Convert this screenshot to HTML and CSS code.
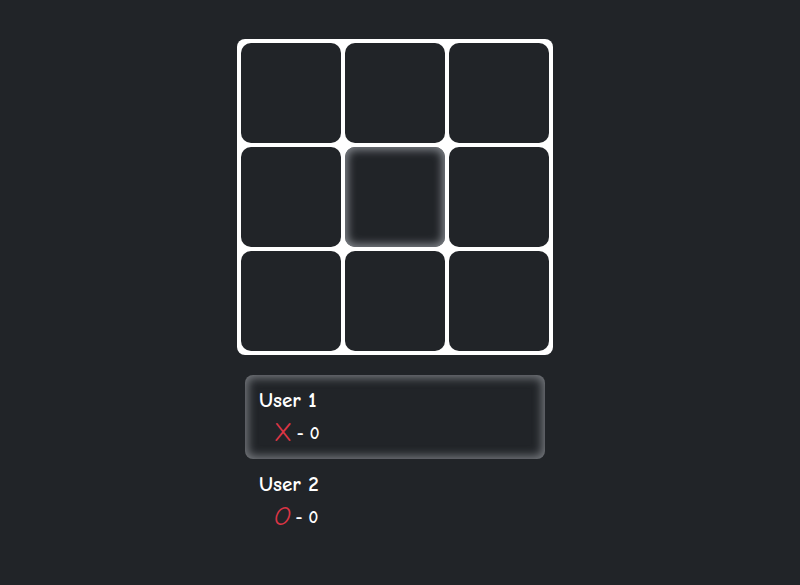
FILE: index.html
```html
<!DOCTYPE html>
<html lang="en">
<head>
<meta charset="utf-8">
<title>Tic Tac Toe</title>
<link rel="stylesheet" href="styles.css">
</head>
<body>
<main class="game">
  <div class="board">
    <div class="cell"></div>
    <div class="cell"></div>
    <div class="cell"></div>
    <div class="cell"></div>
    <div class="cell cell-focus"></div>
    <div class="cell"></div>
    <div class="cell"></div>
    <div class="cell"></div>
    <div class="cell"></div>
  </div>
  <div class="players">
    <div class="player player-active">
      <div class="player-name">User 1</div>
      <div class="player-score"><span class="mark mark-x">X</span><span class="score">- 0</span></div>
    </div>
    <div class="player">
      <div class="player-name">User 2</div>
      <div class="player-score"><span class="mark mark-o">O</span><span class="score">- 0</span></div>
    </div>
  </div>
</main>
</body>
</html>
```
FILE: styles.css
```css
html, body {
  margin: 0;
  background: #212428;
}
body {
  font-family: "Comic Sans MS", "Comic Neue", "Liberation Sans", sans-serif;
  color: #ffffff;
}
.game {
  width: 790px;
  padding-top: 39px;
  display: flex;
  flex-direction: column;
  align-items: center;
}
.board {
  display: grid;
  grid-template-columns: repeat(3, 100px);
  grid-template-rows: repeat(3, 100px);
  gap: 4px;
  padding: 4px;
  background: #ffffff;
  border-radius: 8px;
}
.cell {
  background: #212428;
  border-radius: 10px;
}
.cell-focus {
  box-shadow: inset 0 0 8px 3px #80848a;
}
.players {
  margin-top: 20px;
  width: 300px;
  display: flex;
  flex-direction: column;
}
.player {
  height: 84px;
  box-sizing: border-box;
  padding: 13px 14px 0;
  border-radius: 8px;
}
.player-active {
  box-shadow: inset 0 0 10px 3px #75787d;
}
.player-name {
  font-size: 21px;
  font-weight: bold;
  line-height: 24px;
}
.player-score {
  display: flex;
  align-items: center;
  gap: 5px;
  padding-left: 15px;
  margin-top: 9px;
}
.mark {
  color: #dc3545;
  font-size: 26px;
  line-height: 24px;
}
.mark-o {
  font-style: italic;
}
.score {
  font-size: 17px;
  font-weight: bold;
}
```
